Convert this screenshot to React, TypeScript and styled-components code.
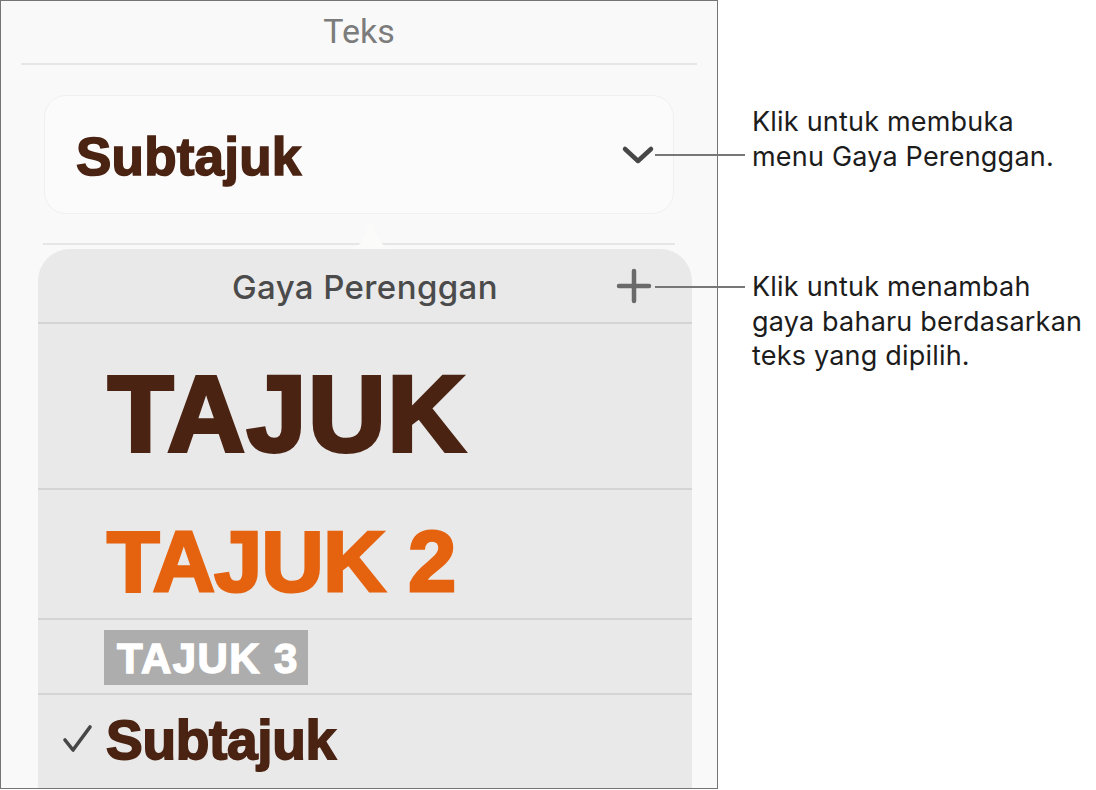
import React from 'react'
import styled, { createGlobalStyle } from 'styled-components'

interface StyleRow {
  label: string
  kind: 'heading' | 'heading2' | 'heading3' | 'subheading'
  height: number
  checked?: boolean
}

const rows: StyleRow[] = [
  { label: 'TAJUK', kind: 'heading', height: 164 },
  { label: 'TAJUK 2', kind: 'heading2', height: 128 },
  { label: 'TAJUK 3', kind: 'heading3', height: 73 },
  { label: 'Subtajuk', kind: 'subheading', height: 93, checked: true }
]

const GlobalStyle = createGlobalStyle`
  body {
    margin: 0;
    background: #ffffff;
    font-family: Inter, 'Liberation Sans', sans-serif;
  }
`

const Chevron = () => (
  <svg width="34" height="22" viewBox="0 0 34 22">
    <polyline
      points="4,5 17,17 30,5"
      fill="none"
      stroke="#474747"
      strokeWidth="4.5"
      strokeLinecap="round"
      strokeLinejoin="round"
    />
  </svg>
)

const Plus = () => (
  <svg width="36" height="36" viewBox="0 0 36 36">
    <path d="M18 3v30M3 18h30" stroke="#6a6a6a" strokeWidth="4.5" strokeLinecap="round" />
  </svg>
)

const Check = () => (
  <svg width="32" height="30" viewBox="0 0 32 30">
    <polyline
      points="3,16 11,26 28,3"
      fill="none"
      stroke="#474747"
      strokeWidth="3.6"
      strokeLinecap="round"
      strokeLinejoin="round"
    />
  </svg>
)

const App = () => {
  return (
    <Page>
      <GlobalStyle />
      <Panel>
        <PanelTitle>Teks</PanelTitle>
        <Divider $inset={20} />
        <StyleButton>
          <CurrentStyle>Subtajuk</CurrentStyle>
          <Chevron />
        </StyleButton>
        <ArrowRow>
          <Divider $inset={42} />
          <PopoverArrow />
        </ArrowRow>
        <Popover>
          <PopoverHeader>
            <PopoverTitle>Gaya Perenggan</PopoverTitle>
            <AddButton>
              <Plus />
            </AddButton>
          </PopoverHeader>
          {rows.map((row) => (
            <StyleItem key={row.label} $height={row.height}>
              <CheckSlot>{row.checked && <Check />}</CheckSlot>
              <StyleLabel $kind={row.kind}>{row.label}</StyleLabel>
            </StyleItem>
          ))}
        </Popover>
      </Panel>

      <Notes>
        <Note>
          Klik untuk membuka
          <br />
          menu Gaya Perenggan.
        </Note>
        <Note>
          Klik untuk menambah
          <br />
          gaya baharu berdasarkan
          <br />
          teks yang dipilih.
        </Note>
      </Notes>

      <Callout $top={154} />
      <Callout $top={286} />
    </Page>
  )
}

const Page = styled.div`
  position: relative;
  display: flex;
  width: 1096px;
  height: 790px;
  overflow: hidden;
`

const Panel = styled.div`
  box-sizing: border-box;
  width: 718px;
  height: 789px;
  flex-shrink: 0;
  display: flex;
  flex-direction: column;
  background: #f9f9f9;
  border: 1px solid #757575;
  overflow: hidden;
`

const PanelTitle = styled.div`
  height: 63px;
  display: flex;
  align-items: center;
  justify-content: center;
  padding-bottom: 3px;
  box-sizing: border-box;
  font-family: Roboto, 'Liberation Sans', sans-serif;
  font-size: 34px;
  color: #7c7c7c;
`

const Divider = styled.div<{ $inset: number }>`
  height: 2px;
  margin: 0 ${(p) => p.$inset}px;
  background: #e6e6e6;
`

const StyleButton = styled.div`
  margin: 30px 43px 0 43px;
  height: 120px;
  box-sizing: border-box;
  display: flex;
  align-items: center;
  justify-content: space-between;
  padding: 0 18px 0 31px;
  border-radius: 22px;
  background: #fbfbfb;
  border: 1px solid #f0f0f0;
`

const CurrentStyle = styled.span`
  font-family: 'Liberation Sans', Arial, sans-serif;
  font-weight: 700;
  font-size: 53px;
  color: #4a2312;
  -webkit-text-stroke: 1.6px #4a2312;
  letter-spacing: 0.2px;
  padding-top: 4px;
`

const ArrowRow = styled.div`
  position: relative;
  margin-top: 29px;
  height: 6px;
`

const PopoverArrow = styled.div`
  position: absolute;
  left: 346px;
  top: -22px;
  width: 48px;
  height: 28px;
  background: #fbfbfa;
  clip-path: path('M0 28 C14 28 18 16 21 5 C22 1 26 1 27 5 C30 16 34 28 48 28 Z');
`

const Popover = styled.div`
  flex: 1;
  margin: 0 25px 0 37px;
  background: #e9e9e9;
  border-radius: 32px 32px 0 0;
  display: flex;
  flex-direction: column;
`

const PopoverHeader = styled.div`
  position: relative;
  height: 73px;
  display: flex;
  align-items: center;
  justify-content: center;
  border-bottom: 2px solid #d4d4d4;
`

const PopoverTitle = styled.span`
  font-family: Inter, 'Liberation Sans', sans-serif;
  font-weight: 500;
  font-size: 33px;
  letter-spacing: 0.4px;
  color: #4b4b4b;
  padding-top: 2px;
`

const AddButton = styled.div`
  position: absolute;
  right: 40px;
  top: 19px;
  display: flex;
`

const StyleItem = styled.div<{ $height: number }>`
  height: ${(p) => p.$height}px;
  flex-shrink: 0;
  display: flex;
  align-items: center;
  border-bottom: 2px solid #d4d4d4;

  &:last-child {
    border-bottom: none;
  }
`

const CheckSlot = styled.div`
  width: 68px;
  padding-left: 24px;
  box-sizing: border-box;
  display: flex;
  align-items: center;
  padding-bottom: 6px;
`

const StyleLabel = styled.span<{ $kind: StyleRow['kind'] }>`
  font-family: 'Liberation Sans', Arial, sans-serif;
  font-weight: 700;
  line-height: 1;
  ${(p) =>
    p.$kind === 'heading' &&
    `
    font-size: 107px;
    color: #4a2312;
    -webkit-text-stroke: 4px #4a2312;
    letter-spacing: 2px;
    padding-top: 16px;
    margin-left: 2px;
  `}
  ${(p) =>
    p.$kind === 'heading2' &&
    `
    font-size: 86px;
    color: #e5620f;
    -webkit-text-stroke: 3px #e5620f;
    letter-spacing: -0.5px;
    padding-top: 14px;
    margin-left: 1px;
  `}
  ${(p) =>
    p.$kind === 'heading3' &&
    `
    font-size: 42px;
    color: #ffffff;
    -webkit-text-stroke: 1.4px #ffffff;
    letter-spacing: 1.4px;
    background: #adadad;
    padding: 8px 9px 5px 13px;
    margin-left: -2px;
    margin-top: 2px;
  `}
  ${(p) =>
    p.$kind === 'subheading' &&
    `
    font-size: 55px;
    color: #4a2312;
    -webkit-text-stroke: 1.8px #4a2312;
    letter-spacing: -0.3px;
    padding-bottom: 2px;
  `}
`

const Notes = styled.div`
  display: flex;
  flex-direction: column;
  gap: 96px;
  padding: 105px 0 0 34px;
`

const Note = styled.p`
  margin: 0;
  font-family: Inter, 'Liberation Sans', sans-serif;
  font-size: 27px;
  letter-spacing: 0.2px;
  line-height: 34.5px;
  color: #1c1c1c;
  white-space: nowrap;
`

const Callout = styled.div<{ $top: number }>`
  position: absolute;
  left: 655px;
  top: ${(p) => p.$top}px;
  width: 90px;
  height: 2px;
  background: #777777;
`

export default App
